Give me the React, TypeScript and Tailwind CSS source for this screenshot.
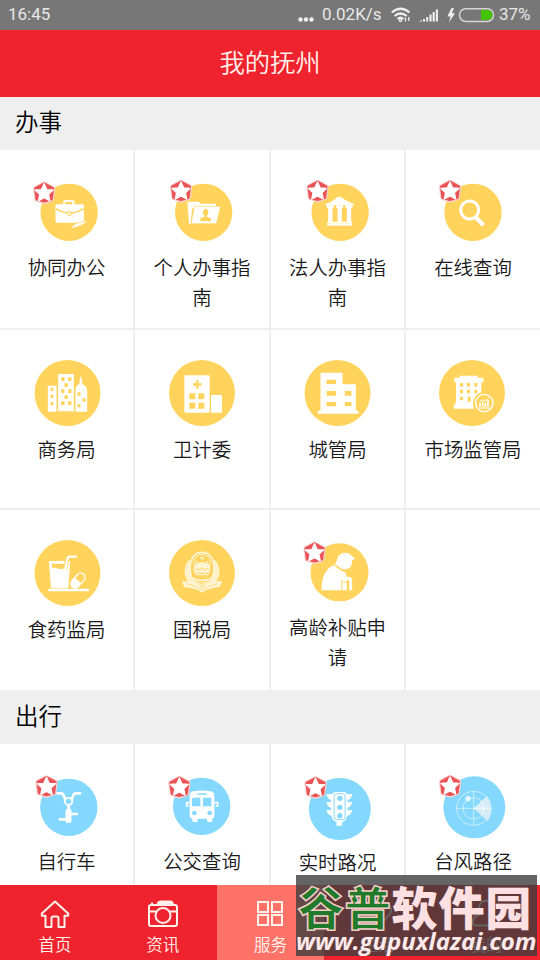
import type { ReactNode } from "react";

type IconProps = { x: number; y?: number; children: ReactNode };

type Service = {
  label: string;
  icon: ReactNode;
  labelClass?: string;
};

const YELLOW = "#ffd35c";
const BLUE = "#85d8fd";

// Icons are drawn at three units per pixel, in an 80px box
function Icon({ x, y = 66, children }: IconProps) {
  return (
    <svg width="80" height="80" viewBox={`${x} ${y} 240 240`} aria-hidden="true">
      {children}
    </svg>
  );
}

function Star({ x, y }: { x: number; y: number }) {
  return (
    <g transform={`translate(${x} ${y})`}>
      <path
        d="M0-27L27-13 23 20 0 28-23 20-27-13Z"
        fill="#fbd3d0"
        stroke="#fbd3d0"
        strokeWidth="13"
        strokeLinejoin="round"
      />
      <path
        d="M0-27L26-13 22 20 0 26-22 20-26-13Z"
        fill="#ea5457"
        stroke="#ea5457"
        strokeWidth="8"
        strokeLinejoin="round"
      />
      <path
        d="M0-27L8-9 27-8 13 5 17 24 0 15-17 24-13 5-27-8-8-9Z"
        fill="#fff"
        stroke="#fff"
        strokeWidth="4"
        strokeLinejoin="round"
      />
    </g>
  );
}

const BriefcaseIcon = () => (
  <Icon x={79.5}>
    <circle cx="206" cy="187" r="86" fill={YELLOW} />
    <path d="M191 165v-8q0-4 4-4h20q4 0 4 4v8" fill="none" stroke="#fff" strokeWidth="6" />
    <rect x="165" y="163" width="85" height="55" rx="4" fill="#fff" />
    <path d="M166 176q40 26 83 0" fill="none" stroke={YELLOW} strokeWidth="4" />
    <rect x="202" y="184" width="9" height="13" rx="2" fill="#fff" stroke={YELLOW} strokeWidth="3" />
    <path d="M210 236l10-12q22-10 42-13-14 15-33 20-12 3-19 5z" fill="#fff" stroke={YELLOW} strokeWidth="2" />
    <Star x={131} y={128} />
  </Icon>
);

const FolderIcon = () => (
  <Icon x={486}>
    <circle cx="611" cy="187" r="86" fill={YELLOW} />
    <path d="M562 155h34l6 6h42q4 0 4 4v8h-66q-5 0-6 6l-4 42h-5z" fill="#fff" />
    <path
      d="M587 169h72q3 0 2 4l-11 45q-1 3-4 3h-70q-3 0-2-4l8-44q1-4 5-4z"
      fill="#fff"
      stroke={YELLOW}
      strokeWidth="2"
    />
    <ellipse cx="617" cy="187" rx="8" ry="10" fill={YELLOW} />
    <path d="M613 194h8v7l12 4v9h-32v-9l12-4z" fill={YELLOW} />
    <Star x={543} y={123} />
  </Icon>
);

const BankIcon = () => (
  <Icon x={82.5}>
    <circle cx="209" cy="187" r="86" fill={YELLOW} />
    <path d="M164 162q20-5 36-20 6-4 12 0 16 13 38 20v4h-86z" fill="#fff" />
    <path d="M169 166h21v8h-4v42h-13v-42h-4zM197 166h21v8h-4v42h-13v-42h-4zM225 166h21v8h-4v42h-13v-42h-4z" fill="#fff" />
    <rect x="170" y="215" width="75" height="12" rx="2" fill="#fff" />
    <path d="M172 221h71" stroke={YELLOW} strokeWidth="1" />
    <Star x={141} y={123} />
  </Icon>
);

const SearchIcon = () => (
  <Icon x={489}>
    <circle cx="609" cy="187" r="86" fill={YELLOW} />
    <circle cx="599" cy="180" r="27" fill="none" stroke="#fff" strokeWidth="9" />
    <path d="M616 201L641 226" stroke="#fff" strokeWidth="13" />
    <Star x={540} y={123} />
  </Icon>
);

const CityIcon = () => (
  <Icon x={79.5}>
    <circle cx="201" cy="189" r="99" fill={YELLOW} />
    <path d="M142 167h26v78h-26zM173 132h47v112h-47zM225 182q0-16 12-20v-10l5-15 3 15v10q15 6 15 20v63h-35z" fill="#fff" />
    <path
      d="M150 173h8v10h-8zM150 194h8v10h-8zM150 216h8v10h-8zM182 142h10v11h-10zM203 142h10v11h-10zM192 160h10v11h-10zM182 178h10v11h-10zM203 178h10v11h-10zM192 196h10v11h-10zM182 214h10v11h-10zM203 214h10v11h-10zM231 187h9v10h-9zM246 205h9v10h-9zM231 222h9v10h-9z"
      fill={YELLOW}
    />
  </Icon>
);

const HospitalIcon = () => (
  <Icon x={486}>
    <circle cx="606" cy="189" r="99" fill={YELLOW} />
    <rect x="553" y="136" width="76" height="112" rx="4" fill="#fff" />
    <rect x="633" y="195" width="33" height="53" rx="2" fill="#fff" />
    <path d="M592 151v25M579 163.500h26" stroke={YELLOW} strokeWidth="7" />
    <path d="M568 190h18v18h-18zM595 190h18v18h-18zM568 218h18v18h-18zM595 218h18v18h-18z" fill={YELLOW} />
  </Icon>
);

const OfficeIcon = () => (
  <Icon x={82.5}>
    <circle cx="201" cy="189" r="99" fill={YELLOW} />
    <path d="M150 128h66v35h40v79h8v9H142v-9h8z" fill="#fff" />
    <path
      d="M168 149h29v13h-29zM168 183h29v14h-29zM168 216h29v13h-29zM223 183h20v14h-20zM223 216h20v13h-20z"
      fill={YELLOW}
    />
  </Icon>
);

const MarketIcon = () => (
  <Icon x={489}>
    <circle cx="606" cy="189" r="99" fill={YELLOW} />
    <path d="M553 143h16v-6h54v6h17v14h-6v30q-23 8-25 34 0 7 3 15h-61v-9q7-7 7-12v-58h-5z" fill="#fff" />
    <path
      d="M570 159h9v11h-9zM591 159h9v11h-9zM613 159h9v11h-9zM570 179h9v11h-9zM591 179h9v11h-9zM613 179h9v11h-9zM570 200h9v11h-9zM593 200h9v15h-9z"
      fill={YELLOW}
    />
    <circle cx="643" cy="219" r="26" fill={YELLOW} stroke="#fff" strokeWidth="4" />
    <path d="M630 230v-10M638 230v-15M646 230v-12M654 230v-20" stroke="#fff" strokeWidth="5" />
    <path d="M628 217q10-12 18-4l12-10M627 234h33" fill="none" stroke="#fff" strokeWidth="3" />
  </Icon>
);

const DrinkIcon = () => (
  <Icon x={79.5}>
    <circle cx="201" cy="189" r="99" fill={YELLOW} />
    <path d="M145 153h64l-5 76q0 6-6 6h-42q-5 0-5-6z" fill="#fff" />
    <path d="M154 161h38l-3 14q-10 4-20 0-8-3-14-1z" fill={YELLOW} />
    <path d="M194 180l6-31q1-9 9-9h20" fill="none" stroke={YELLOW} strokeWidth="12" />
    <path d="M194 180l6-31q1-9 9-9h20" fill="none" stroke="#fff" strokeWidth="7" />
    <g transform="rotate(-48 232 212)">
      <rect x="207" y="199" width="51" height="26" rx="13" fill={YELLOW} stroke="#fff" strokeWidth="4" />
      <path d="M233 199h-13q-13 1-13 13t13 13h13z" fill="#fff" />
    </g>
    <path d="M146 240h117" stroke="#fff" strokeWidth="7" strokeLinecap="round" />
  </Icon>
);

const TaxIcon = () => (
  <Icon x={486}>
    <circle cx="606" cy="189" r="99" fill={YELLOW} />
    <path d="M572 154q-20 28-4 53 15 18 38 18t38-18q16-25-4-53" fill="none" stroke="#fff4d3" strokeWidth="15" />
    <path d="M569 157q-17 28-2 49 15 16 39 16t39-16q15-21-2-49" fill="none" stroke={YELLOW} strokeWidth="1.500" strokeDasharray="6 4" />
    <path d="M575 203c-9-28-7-76 31-76s40 48 31 76q-31 16-62 0z" fill={YELLOW} stroke="#fff4d3" strokeWidth="5" />
    <circle cx="606" cy="158" r="25" fill="none" stroke="#fff4d3" strokeWidth="3" />
    <path d="M583 164q23-16 46 0l3 15-8 17h-36l-8-17z" fill="#fff4d3" />
    <path d="M606 137l2 5h5l-4 3 2 5-5-3-5 3 2-5-4-3h5zM587 153h6v5h-6zM619 153h6v5h-6z" fill="#fff4d3" />
    <path d="M584 182l8-8 7 7 7-8 8 8 7-7 8 8M588 190h36" fill="none" stroke={YELLOW} strokeWidth="3" />
    <path d="M545 214h24q18 15 37 16 19-1 37-16h24l-8 17q-35 3-53 17-18-14-53-17z" fill="#fff4d3" />
    <path d="M558 221q30 5 48 19 18-14 48-19M600 220h12v10h-12z" fill="none" stroke={YELLOW} strokeWidth="2" />
  </Icon>
);

const ElderIcon = () => (
  <Icon x={82.5}>
    <circle cx="207" cy="187" r="87" fill={YELLOW} />
    <path d="M190 164q8-3 9-14 4-20 24-22 13-1 20 9l10 7-4 6h-5q3 22-14 27-17 4-27-8-5-5-13-5z" fill="#fff" />
    <path d="M187 166q9 2 18 11 9 7 18 9 4 5 6 15 15-3 16 10v30h-9v-27q0-5-3-5t-3 5v27h-77q-1-46 22-66 8-8 12-9z" fill="#fff" />
    <path d="M214 241v-28h5M219 215l6 3 6-3M230 241v-26" fill="none" stroke={YELLOW} strokeWidth="3" />
    <Star x={132} y={128} />
  </Icon>
);

const BikeIcon = () => (
  <Icon x={79.5} y={228}>
    <circle cx="205" cy="352" r="86" fill={BLUE} />
    <path d="M170 310h13q5 0 7 8l4 8M239 310h-14q-5 0-7 8l-4 8" fill="none" stroke="#fff" strokeWidth="8" strokeLinecap="round" />
    <path d="M190 322h28v16l-9 10v12h-9v-12l-10-10z" fill="#fff" />
    <circle cx="204" cy="334" r="8" fill={BLUE} />
    <rect x="195" y="356" width="18" height="43" rx="7" fill="#fff" />
    <path d="M178 388h18M212 372h17" stroke="#fff" strokeWidth="8" strokeLinecap="round" />
    <Star x={138} y={289} />
  </Icon>
);

const BusIcon = () => (
  <Icon x={486} y={228}>
    <circle cx="605" cy="349" r="86" fill={BLUE} />
    <path d="M580 304q26-5 52 0 11 2 11 13v61q0 7-6 7v7q0 4-5 4h-6q-5 0-5-4v-6h-28v6q0 4-5 4h-6q-5 0-5-4v-7q-8 0-8-7v-61q0-11 11-13z" fill="#fff" />
    <path d="M577 323h24v26h-25v-20zM609 323h25v26h-25z" fill={BLUE} />
    <path d="M594 312h25" stroke={BLUE} strokeWidth="4" strokeLinecap="round" />
    <circle cx="583" cy="369" r="7" fill={BLUE} />
    <circle cx="629" cy="369" r="7" fill={BLUE} />
    <path d="M569 338h-9v10h6M643 338h10v10h-6" fill="none" stroke="#fff" strokeWidth="5" />
    <Star x={538} y={291} />
  </Icon>
);

const TrafficIcon = () => (
  <Icon x={82.5} y={228}>
    <circle cx="208" cy="357" r="93" fill={BLUE} />
    <path d="M169 312h17q2-6 9-6h25q7 0 9 6h17q-2 13-15 19v5h14q-2 13-14 18v6h14q-2 13-15 18-3 15-15 18v11h-17v-11q-12-3-15-18-13-5-15-18h14v-6q-13-5-14-18h14v-5q-12-6-14-19z" fill="#fff" />
    <rect x="191" y="311" width="33" height="78" rx="9" fill="#fff" stroke={BLUE} strokeWidth="3" />
    <circle cx="208" cy="325" r="8" fill={BLUE} />
    <circle cx="208" cy="352" r="8" fill={BLUE} />
    <circle cx="208" cy="377" r="8" fill={BLUE} />
    <Star x={135} y={292} />
  </Icon>
);

const RadarIcon = () => (
  <Icon x={489} y={228}>
    <circle cx="613" cy="352" r="93" fill={BLUE} />
    <g fill="none" stroke="#c9eefb" strokeWidth="3">
      <circle cx="611" cy="355" r="51" />
      <circle cx="611" cy="355" r="32" />
      <path d="M611 302v106M558 355h106" />
    </g>
    <path d="M611 355l40-37q26 37 2 76z" fill="#d6edf8" />
    <path d="M632 335q17 19 2 41M611 355h51" fill="none" stroke="#f4fbfe" strokeWidth="3" />
    <circle cx="594" cy="326" r="8" fill="#e4f7fd" />
    <Star x={540} y={288} />
  </Icon>
);

const affairs: Service[] = [
  { label: "协同办公", icon: <BriefcaseIcon /> },
  { label: "个人办事指南", icon: <FolderIcon /> },
  { label: "法人办事指南", icon: <BankIcon /> },
  { label: "在线查询", icon: <SearchIcon /> },
  { label: "商务局", icon: <CityIcon />, labelClass: "mt-0.5" },
  { label: "卫计委", icon: <HospitalIcon />, labelClass: "mt-0.5" },
  { label: "城管局", icon: <OfficeIcon />, labelClass: "mt-0.5" },
  { label: "市场监管局", icon: <MarketIcon />, labelClass: "mt-0.5" },
  { label: "食药监局", icon: <DrinkIcon />, labelClass: "mt-0.5" },
  { label: "国税局", icon: <TaxIcon />, labelClass: "mt-0.5" },
  { label: "高龄补贴申请", icon: <ElderIcon /> },
  { label: "", icon: null },
];

const travel: Service[] = [
  { label: "自行车", icon: <BikeIcon /> },
  { label: "公交查询", icon: <BusIcon /> },
  { label: "实时路况", icon: <TrafficIcon />, labelClass: "mt-px" },
  { label: "台风路径", icon: <RadarIcon /> },
];

function ServiceCell({ service }: { service: Service }) {
  return (
    <div className="flex flex-col items-center bg-white pt-[22px]">
      {service.icon}
      <p
        className={`w-[100px] text-center text-[19.4px] leading-[30px] font-[350] text-[#1a1a1a] ${service.labelClass ?? ""}`}
      >
        {service.label}
      </p>
    </div>
  );
}

function StatusBar() {
  return (
    <div className="flex h-[30px] shrink-0 items-center bg-[#777] pl-[8px] font-[Roboto] text-[17px] text-[#e8e8e8]">
      <span className="w-[290px]">16:45</span>
      <svg width="17" height="30" fill="#f0f0f0" aria-hidden="true">
        <circle cx="2.500" cy="19.500" r="2.200" />
        <circle cx="8" cy="19.500" r="2.200" />
        <circle cx="13.500" cy="19.500" r="2.200" />
      </svg>
      <span className="ml-[7px] w-[69px]">0.02K/s</span>
      <svg width="20" height="30" fill="none" stroke="#ededed" strokeWidth="2.200" aria-hidden="true">
        <path d="M.8 12.500q9-7.500 17.600 0M3.500 16q6-5 12.200 0M6.500 19q3-2.500 6 0" />
        <circle cx="9.500" cy="20.500" r=".6" />
        <path d="M14.500 17.500v4M17.800 17v4" strokeWidth="1.300" />
      </svg>
      <svg width="20" height="30" className="ml-[8px]" fill="#ededed" aria-hidden="true">
        <path d="M0 21.500l3-1.500v1.500zM4 19h2v2.500H4zM7.200 17h2v4.500h-2zM10.400 14.500h2.200v7h-2.200zM13.600 12h2.200v9.500h-2.200zM16.800 9.500H19v12h-2.200z" />
      </svg>
      <svg width="48" height="30" className="ml-[8px]" aria-hidden="true">
        <path d="M4.500 8L.3 16.500h3.200L2 22.500l6-9.300H4.800L7 8z" fill="#ededed" />
        <rect x="12.500" y="8.700" width="34" height="12.800" rx="6.400" fill="none" stroke="#d5d5d5" strokeWidth="1.500" />
        <path d="M34 10h6.500a5 5 0 010 10H34z" fill="#44c400" />
      </svg>
      <span className="ml-[4px]">37%</span>
    </div>
  );
}

const HomeIcon = () => (
  <svg width="32" height="30" fill="none" stroke="#fff1ec" strokeWidth="2" strokeLinejoin="round" aria-hidden="true">
    <path d="M16 2.500L2.800 14.500v2.200h3.700V28h6v-8.500q0-2 1.700-2h3.600q1.700 0 1.700 2V28h6V16.700h3.700v-2.200z" />
  </svg>
);

const CameraIcon = () => (
  <svg width="32" height="30" fill="none" stroke="#fff1ec" strokeWidth="2" aria-hidden="true">
    <rect x="2" y="6" width="28" height="21" rx="2" />
    <circle cx="16" cy="16.500" r="7.500" />
    <path d="M2 12.500h7M23 12.500h7M5 5V3.500M10.500 5q1-2.500 3-2.500h10q2 0 2.500 3" />
    <path d="M11 4.500h14" strokeWidth="3" />
  </svg>
);

const GridIcon = () => (
  <svg width="32" height="30" fill="none" stroke="#fff1ec" strokeWidth="2" aria-hidden="true">
    <path d="M4 3h10v10H4zM18 3h10v10H18zM4 16h10v10H4zM18 16h10v10H18z" />
  </svg>
);

const HeartIcon = () => (
  <svg width="32" height="30" fill="none" stroke="#fff1ec" strokeWidth="2" aria-hidden="true">
    <path d="M16 27L4.500 15.500C-1 7 9-1 16 7c7-8 17 0 11.500 8.500z" />
  </svg>
);

const UserIcon = () => (
  <svg width="32" height="30" fill="none" stroke="#fff1ec" strokeWidth="2" aria-hidden="true">
    <path d="M12 14.500a7 7 0 118 0q9 2.500 9 8.500v1.500q0 2-3 2H6q-3 0-3-2V23q0-6 9-8.500z" />
  </svg>
);

const tabs = [
  { label: "首页", icon: <HomeIcon /> },
  { label: "资讯", icon: <CameraIcon /> },
  { label: "服务", icon: <GridIcon />, active: true },
  { label: "生活", icon: <HeartIcon /> },
  { label: "我的", icon: <UserIcon /> },
];

function SectionTitle({ children }: { children: ReactNode }) {
  return (
    <h2 className="flex h-full items-center pb-0.5 pl-[15px] text-[23.5px] leading-none font-[350] text-black">
      {children}
    </h2>
  );
}

export default function App() {
  return (
    <div className="relative flex h-[960px] w-[540px] flex-col overflow-hidden bg-[#efefef] font-['Noto_Sans_CJK_SC',sans-serif]">
      <StatusBar />
      <header className="flex h-[67px] shrink-0 items-center justify-center bg-[#ef232d] pb-1">
        <h1 className="text-[25.3px] leading-none font-[350] text-[#fff1ec]">我的抚州</h1>
      </header>

      <div className="h-[53px] shrink-0 pb-0.5">
        <SectionTitle>办事</SectionTitle>
      </div>
      <div className="grid shrink-0 grid-cols-[133px_134px_133px_134px] grid-rows-[178px_178px_180px] gap-0.5">
        {affairs.map((s, i) => (
          <ServiceCell key={i} service={s} />
        ))}
      </div>

      <div className="h-[54px] shrink-0">
        <SectionTitle>出行</SectionTitle>
      </div>
      <div className="grid shrink-0 grid-cols-[133px_134px_133px_134px] grid-rows-[141px] gap-0.5">
        {travel.map((s) => (
          <ServiceCell key={s.label} service={s} />
        ))}
      </div>

      <nav className="grid h-[75px] shrink-0 grid-cols-5 bg-[#ef232d] pl-px text-[#fff1ec]">
        {tabs.map((t) => (
          <div
            key={t.label}
            className={`flex flex-col items-center pt-[14px] ${t.active ? "bg-[#ff7268]" : ""}`}
          >
            {t.icon}
            <span className="mt-[6px] text-[16.5px] leading-[18px] font-[350]">{t.label}</span>
          </div>
        ))}
      </nav>

      <div className="absolute top-[875px] left-[296px] h-[81px] w-[241px] bg-[#3d3d3d]/80 whitespace-nowrap">
        <p className="mt-[7px] ml-[2px] text-[46px] leading-[46px] font-black tracking-[0.8px] text-[#ffe0e2]">
          <span className="text-[#1f7a2c] [-webkit-text-stroke:1.5px_#f3cfc8]">谷普</span>
          软件园
        </p>
        <p className="mt-[1px] font-['Open_Sans',sans-serif] text-[24px] leading-[24px] font-bold text-[#ffe9ea] italic">
          www.gupuxlazai.com
        </p>
      </div>
    </div>
  );
}
